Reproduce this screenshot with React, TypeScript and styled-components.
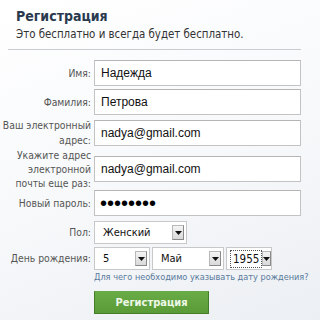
import React from "react";
import styled, { createGlobalStyle } from "styled-components";

const Global = createGlobalStyle`
  html, body { margin: 0; padding: 0; }
  body {
    width: 310px; height: 320px; overflow: hidden;
    background: linear-gradient(160deg, #ffffff 0%, #f6f8fa 55%, #eceff3 100%);
    font-family: "DejaVu Sans Condensed", "DejaVu Sans", sans-serif;
  }
`;

const Page = styled.div`
  width: 310px;
  height: 320px;
  box-sizing: border-box;
  padding: 6px 9px 0 0;
`;

const Header = styled.div`
  margin-left: 8px;
  padding: 0 0 7px 8px;
  border-bottom: 1px solid #c9cdd2;
  margin-bottom: 10px;
`;

const Title = styled.h1`
  margin: 0;
  font-family: "DejaVu Sans Condensed", "DejaVu Sans", sans-serif;
  font-weight: bold;
  font-size: 14px;
  line-height: 20px;
  color: #2a3a4e;
`;

const Subtitle = styled.div`
  font-size: 11.4px;
  line-height: 16px;
  color: #333;
`;

const Row = styled.div<{ $mb?: number }>`
  display: flex;
  align-items: center;
  gap: 3px;
  margin-bottom: ${(p) => (p.$mb ?? 3)}px;
`;

const Label = styled.label<{ $lh?: number }>`
  width: 91px;
  flex: none;
  text-align: right;
  font-size: 10.3px;
  line-height: ${(p) => p.$lh ?? 15}px;
  color: #555;
  white-space: nowrap;
`;

const TextInput = styled.input`
  box-sizing: border-box;
  width: 207px;
  height: 26px;
  margin: 0;
  padding: 0 6px;
  border: 1px solid #c3c3c3;
  border-top-color: #b5b5b5;
  background: #fff;
  font-family: "Liberation Sans", Arial, sans-serif;
  font-size: 12px;
  color: #111;
  outline: none;
`;

const PasswordInput = styled(TextInput)`
  font-size: 20px;
  padding: 0 5px;
  color: #000;
`;

const Selects = styled.div`
  display: flex;
  gap: 2px;
`;

const SelectBox = styled.div<{ $w: number }>`
  box-sizing: border-box;
  width: ${(p) => p.$w}px;
  height: 23px;
  display: flex;
  align-items: center;
  justify-content: space-between;
  padding: 0 2px 0 8px;
  border: 1px solid #c8c8c8;
  background: #fff;
  font-size: 11px;
  color: #111;
`;

const FocusValue = styled.span`
  margin-left: -5px;
  padding: 1px 2px;
  border: 1px dotted #555;
  font-size: 11.5px;
  line-height: 14px;
`;

const ArrowBtn = styled.span`
  box-sizing: border-box;
  width: 12px;
  height: 15px;
  display: flex;
  align-items: center;
  justify-content: center;
  border: 1px solid #b8b8b8;
  border-right-color: #8a8a8a;
  border-bottom-color: #8a8a8a;
  background: linear-gradient(#f4f4f4, #d9d9d9);
`;

const Arrow = () => (
  <svg width="7" height="4" viewBox="0 0 7 4">
    <path d="M0 0h7L3.5 4z" fill="#111" />
  </svg>
);

const Select = ({ w, value, focus }: { w: number; value: string; focus?: boolean }) => (
  <SelectBox $w={w}>
    {focus ? <FocusValue>{value}</FocusValue> : <span>{value}</span>}
    <ArrowBtn>
      <Arrow />
    </ArrowBtn>
  </SelectBox>
);

const Indented = styled.div`
  padding-left: 94px;
`;

const HelpLink = styled.a`
  display: block;
  font-size: 9.1px;
  line-height: 13px;
  color: #5a7a9c;
  text-decoration: none;
  margin: 1px 0 7px;
  white-space: nowrap;
`;

const Button = styled.button`
  width: 115px;
  height: 23px;
  margin: 0;
  padding: 0;
  border: 1px solid #437f2a;
  border-top-color: #6aa84a;
  background: linear-gradient(#69ab45, #5a9b38);
  color: #eef8e8;
  font-family: "DejaVu Sans Condensed", "DejaVu Sans", sans-serif;
  font-weight: bold;
  font-size: 11px;
  cursor: pointer;
`;

export default function App() {
  return (
    <>
      <Global />
      <Page>
        <Header>
          <Title>Регистрация</Title>
          <Subtitle>Это бесплатно и всегда будет бесплатно.</Subtitle>
        </Header>

        <Row>
          <Label>Имя:</Label>
          <TextInput defaultValue="Надежда" />
        </Row>
        <Row>
          <Label>Фамилия:</Label>
          <TextInput defaultValue="Петрова" />
        </Row>
        <Row $mb={0}>
          <Label $lh={15}>
            Ваш электронный
            <br />
            адрес:
          </Label>
          <TextInput defaultValue="nadya@gmail.com" />
        </Row>
        <Row $mb={0}>
          <Label $lh={14}>
            Укажите адрес
            <br />
            электронной
            <br />
            почты еще раз:
          </Label>
          <TextInput defaultValue="nadya@gmail.com" />
        </Row>
        <Row $mb={5}>
          <Label>Новый пароль:</Label>
          <PasswordInput type="password" defaultValue="12345678" />
        </Row>
        <Row>
          <Label>Пол:</Label>
          <Select w={93} value="Женский" />
        </Row>
        <Row $mb={0}>
          <Label>День рождения:</Label>
          <Selects>
            <Select w={56} value="5" />
            <Select w={72} value="Май" />
            <Select w={46} value="1955" focus />
          </Selects>
        </Row>
        <Indented>
          <HelpLink href="#">Для чего необходимо указывать дату рождения?</HelpLink>
          <Button>Регистрация</Button>
        </Indented>
      </Page>
    </>
  );
}
